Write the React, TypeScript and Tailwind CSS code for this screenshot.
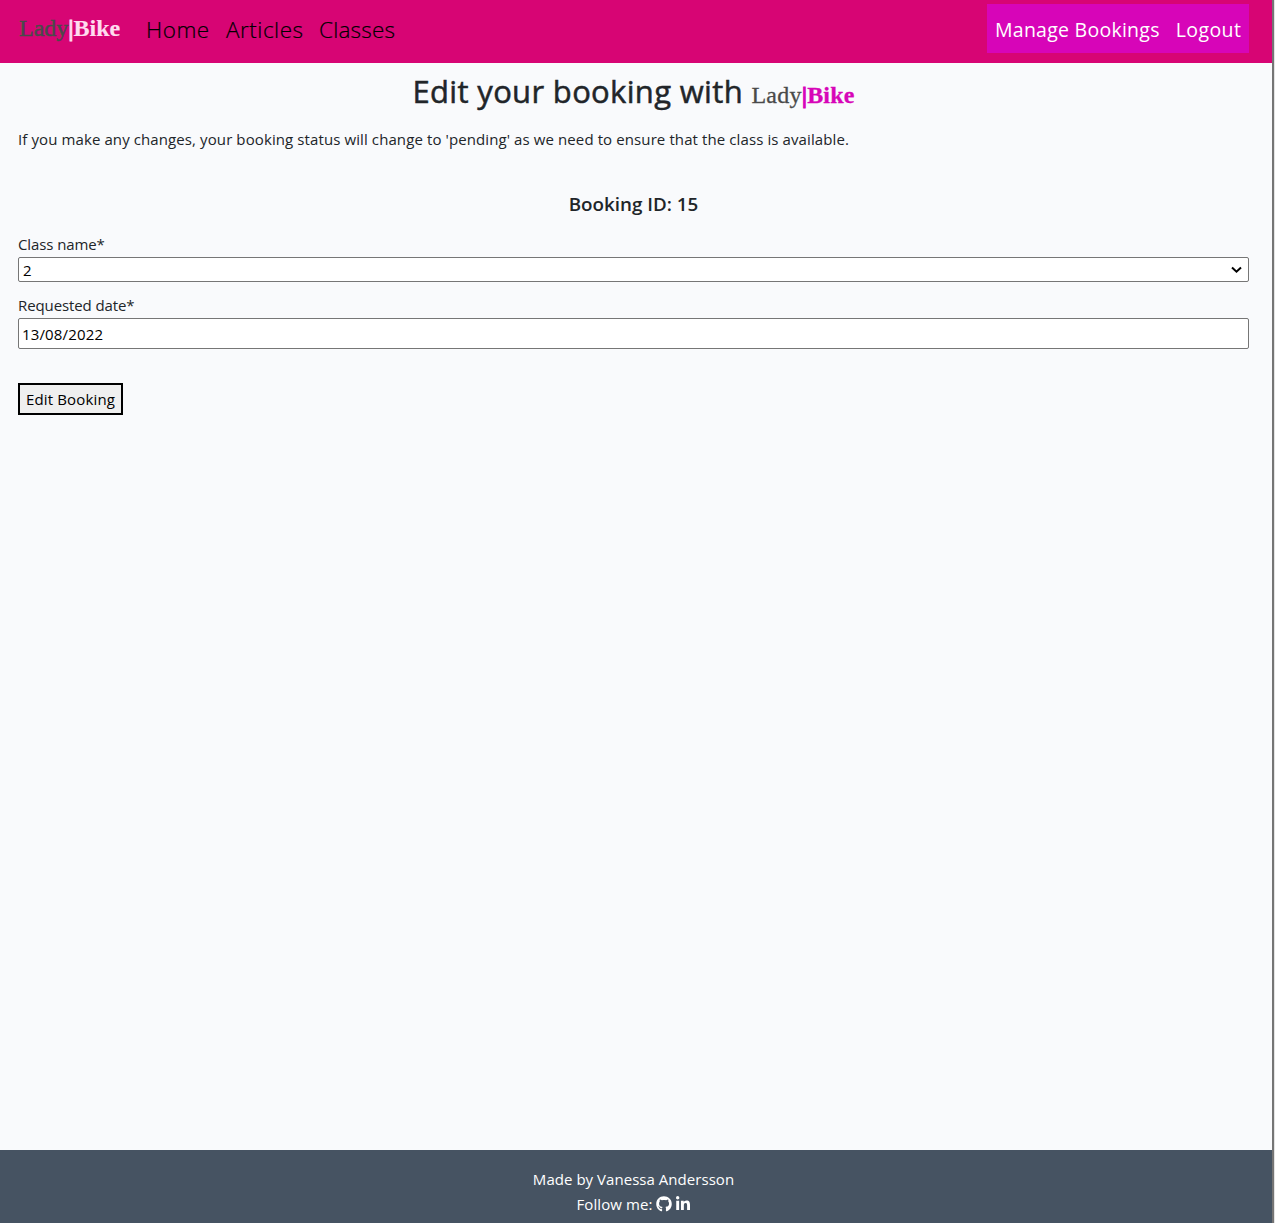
import { FaGithub, FaLinkedinIn } from "react-icons/fa";

function Brand({ className, bike }: { className: string; bike: string }) {
  return (
    <span className={`font-['Liberation_Serif',serif] whitespace-nowrap text-[#4a4a4a] ${className}`}>
      Lady
      <span className={bike}>
        <span className="[-webkit-text-stroke:1px]">|</span>Bike
      </span>
    </span>
  );
}

export default function App() {
  return (
    <div className="flex h-[1223px] w-[1275px] overflow-hidden bg-[#f9fafc] font-['Open_Sans',sans-serif] text-[15px] leading-6 text-[#212529]">
      <div className="flex w-[1272px] flex-col">
        <nav className="flex h-[63px] items-start bg-[#d70574] pl-[19px]">
          <Brand
            className="mt-3 w-[127px] text-[24px] leading-8 [-webkit-text-stroke:0.5px]"
            bike="font-bold tracking-[-0.05px] text-[#ffdcee] [-webkit-text-stroke:0.2px]"
          />
          <div className="mt-3 flex gap-4 text-[22.5px] leading-9 font-light text-black [-webkit-text-stroke:0.2px_black]">
            <a className="w-16 tracking-[0.5px] whitespace-nowrap">Home</a>
            <a className="w-[77px] tracking-[0.5px] whitespace-nowrap">Articles</a>
            <a className="tracking-[0.2px] whitespace-nowrap">Classes</a>
          </div>
          <div className="mt-1 mr-[23px] ml-auto flex h-[49px] w-[262px] gap-4 bg-[#d705b8] px-2 pt-2 text-[19.5px] leading-9 text-white">
            <a className="w-[165px] tracking-[0.26px] whitespace-nowrap">Manage Bookings</a>
            <a className="tracking-[0.4px] whitespace-nowrap">Logout</a>
          </div>
        </nav>
        <main className="flex flex-1 flex-col pr-[23px] pl-[18px]">
          <h1 className="mt-[9px] flex h-[38px] items-center justify-center gap-2 text-[31px] font-medium">
            <span className="w-[331px] tracking-[0.33px] whitespace-nowrap [-webkit-text-stroke:0.5px_#212529]">
              Edit your booking with
            </span>
            <Brand
              className="mt-2 w-[103px] text-[24px] tracking-[0.2px] [-webkit-text-stroke:0.3px]"
              bike="font-bold text-[#d705b8]"
            />
          </h1>
          <p className="mt-[17px] tracking-[0.102px] whitespace-nowrap">
            If you make any changes, your booking status will change to 'pending' as we need to ensure that the class is available.
          </p>
          <h2 className="mt-[41px] text-center text-[18.8px] font-semibold">Booking ID: 15</h2>
          <label className="mt-4 block tracking-[-0.1px]">Class name*</label>
          <div className="mt-px flex h-[25px] items-center justify-between rounded-[2px] border border-[#767676] bg-white pr-1.5 pl-1 text-black">
            <span>2</span>
            <svg width="11" height="8" viewBox="0 0 11 8" fill="none" stroke="black" strokeWidth="2">
              <path d="M1 1.5 5.5 5.7 10 1.5" />
            </svg>
          </div>
          <label className="mt-[11px] block tracking-[-0.1px]">Requested date*</label>
          <div className="mt-px flex h-[31px] items-center rounded-[2px] border border-[#767676] bg-white pl-[3px] text-black">
            <span className="tracking-[0.15px]">13/08/2022</span>
          </div>
          <button className="mt-[34px] h-8 w-[105px] border-2 border-black bg-[#efefef] tracking-[0.15px] whitespace-nowrap text-black">
            Edit Booking
          </button>
        </main>
        <footer className="flex h-[73px] flex-col items-center bg-[#465362] pt-[17px] pr-[5px] text-white">
          <p className="h-[25px] tracking-[0.04px]">Made by Vanessa Andersson</p>
          <p className="flex items-center pl-px">
            <span className="tracking-[0.08px]">Follow me:</span>
            <FaGithub className="ml-1" size={16} />
            <FaLinkedinIn className="ml-[3px]" size={16} />
          </p>
        </footer>
      </div>
      <div className="w-0.5 bg-[#757575]" />
      <div className="w-px bg-[#e4e4e4]" />
    </div>
  );
}
